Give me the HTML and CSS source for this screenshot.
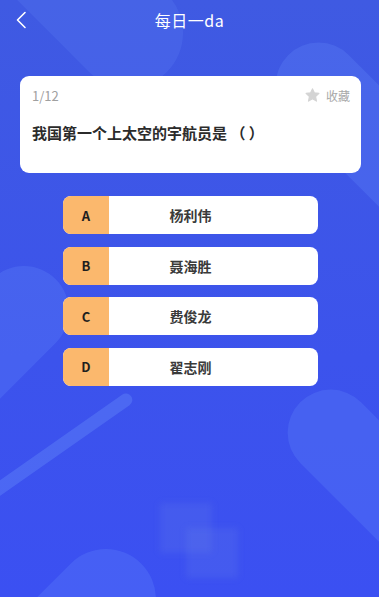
FILE: index.html
```html
<!DOCTYPE html>
<html lang="zh-CN">
<head>
    <meta charset="UTF-8">
    <meta name="viewport" content="width=device-width, initial-scale=1.0">
    <title>每日一da</title>
    <link rel="stylesheet" href="styles.css">
</head>
<body>

    <div class="bg">
        <span class="deco deco-tl"></span>
        <span class="deco deco-tr"></span>
        <span class="deco deco-ml"></span>
        <span class="deco deco-line"></span>
        <span class="deco deco-mr"></span>
        <span class="deco deco-bl"></span>
        <span class="blur blur-1"></span>
        <span class="blur blur-2"></span>
    </div>

    <div class="page">
        <div class="header">
            <a class="back" href="#">
                <svg width="12" height="18" viewBox="0 0 12 18">
                    <path d="M10 1.5 L2.5 9 L10 16.5" fill="none" stroke="#fff" stroke-width="1.6" stroke-linecap="round" stroke-linejoin="round"/>
                </svg>
            </a>
            <h1 class="title">每日一da</h1>
        </div>

        <div class="card">
            <div class="card-top">
                <span class="count">1/12</span>
                <span class="fav">
                    <svg width="15" height="14" viewBox="0 0 24 23">
                        <path d="M12 1.5 L15 8 L22.5 8.8 L17 14 L18.5 21.5 L12 17.8 L5.5 21.5 L7 14 L1.5 8.8 L9 8 Z" fill="#d4d4d4" stroke="#d4d4d4" stroke-width="2" stroke-linejoin="round"/>
                    </svg>
                    收藏
                </span>
            </div>
            <p class="question">我国第一个上太空的宇航员是 （ ）</p>
        </div>

        <div class="options">
            <div class="option"><span class="letter">A</span><span class="answer">杨利伟</span></div>
            <div class="option"><span class="letter">B</span><span class="answer">聂海胜</span></div>
            <div class="option"><span class="letter">C</span><span class="answer">费俊龙</span></div>
            <div class="option"><span class="letter">D</span><span class="answer">翟志刚</span></div>
        </div>
    </div>

</body>
</html>
```

FILE: styles.css
```css
body {
    margin: 0;
    width: 379px;
    height: 597px;
    overflow: hidden;
    position: relative;
    font-family: "Noto Sans CJK SC", "Noto Sans", sans-serif;
    background: linear-gradient(180deg, #3f5ae2 0%, #3c53ec 60%, #3b50f2 100%);
}
.bg {
    position: absolute;
    inset: 0;
    overflow: hidden;
}
.deco {
    position: absolute;
    background: rgba(110, 150, 255, 0.22);
    border-radius: 60px;
    transform: rotate(45deg);
}
.deco-tl {
    width: 110px;
    height: 260px;
    left: 20px;
    top: -150px;
    transform: rotate(-45deg);
    background: rgba(110, 150, 255, 0.16);
}
.deco-tr {
    width: 86px;
    height: 240px;
    left: 330px;
    top: 20px;
    transform: rotate(-45deg);
}
.deco-ml {
    width: 90px;
    height: 200px;
    left: -60px;
    top: 250px;
    transform: rotate(45deg);
}
.deco-line {
    width: 13px;
    height: 170px;
    left: 55px;
    top: 360px;
    border-radius: 7px;
    transform: rotate(55deg);
    background: rgba(120, 160, 255, 0.28);
}
.deco-mr {
    width: 86px;
    height: 220px;
    left: 335px;
    top: 370px;
    transform: rotate(-45deg);
}
.deco-bl {
    width: 100px;
    height: 230px;
    left: 10px;
    top: 530px;
    transform: rotate(45deg);
}
.blur {
    position: absolute;
    width: 52px;
    height: 50px;
    background: rgba(120, 140, 230, 0.16);
    filter: blur(3px);
}
.blur-1 { left: 160px; top: 503px; }
.blur-2 { left: 186px; top: 528px; }

.page {
    position: relative;
}
.header {
    height: 40px;
    display: flex;
    align-items: center;
    justify-content: center;
    position: relative;
}
.back {
    position: absolute;
    left: 15px;
    top: 11px;
    display: flex;
}
.title {
    margin: 0;
    font-size: 16px;
    font-weight: normal;
    color: #fff;
    letter-spacing: 0.5px;
}
.card {
    margin: 36px 18px 0 20px;
    height: 97px;
    box-sizing: border-box;
    padding: 10px 11px 0 12px;
    background: #fff;
    border-radius: 9px;
}
.card-top {
    display: flex;
    justify-content: space-between;
    align-items: center;
    height: 18px;
}
.count {
    font-size: 13px;
    color: #a0a0a0;
}
.fav {
    display: flex;
    align-items: center;
    gap: 6px;
    font-size: 12px;
    color: #a8a8a8;
}
.question {
    margin: 18px 0 0 0;
    font-size: 15px;
    font-weight: bold;
    color: #2b2b2b;
}
.options {
    margin: 23px 0 0 63px;
    width: 255px;
    display: flex;
    flex-direction: column;
    gap: 12.5px;
}
.option {
    height: 38px;
    display: grid;
    grid-template-columns: 46px 1fr 46px;
    align-items: stretch;
    background: #fff;
    border-radius: 8px;
    overflow: hidden;
}
.letter {
    background: #fbb86d;
    display: flex;
    align-items: center;
    justify-content: center;
    font-size: 13px;
    font-weight: bold;
    color: #1f1f1f;
}
.answer {
    display: flex;
    align-items: center;
    justify-content: center;
    font-size: 14px;
    font-weight: bold;
    color: #3a3a3a;
}
```
